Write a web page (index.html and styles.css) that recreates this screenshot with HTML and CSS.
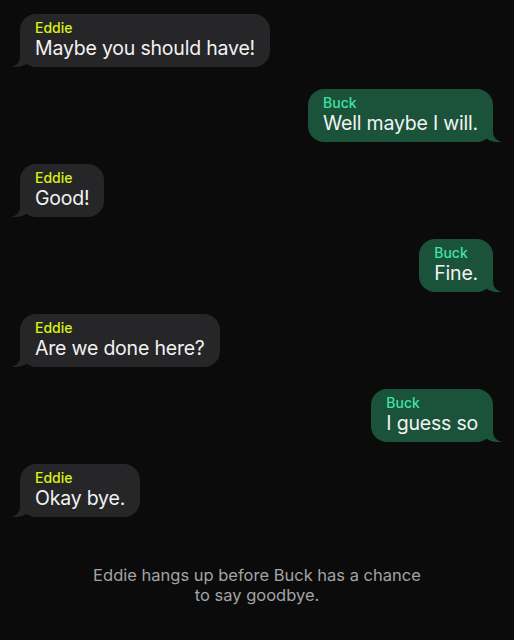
FILE: index.html
```html
<!DOCTYPE html>
<html lang="en">
<head>
  <meta charset="UTF-8">
  <title>Eddie &amp; Buck</title>
  <link rel="stylesheet" href="styles.css">
</head>
<body>
  <div class="thread">
    <div class="msg them">
      <div class="bubble">
        <div class="name">Eddie</div>
        <div class="text">Maybe you should have!</div>
      </div>
    </div>
    <div class="msg me">
      <div class="bubble">
        <div class="name">Buck</div>
        <div class="text">Well maybe I will.</div>
      </div>
    </div>
    <div class="msg them">
      <div class="bubble">
        <div class="name">Eddie</div>
        <div class="text">Good!</div>
      </div>
    </div>
    <div class="msg me">
      <div class="bubble">
        <div class="name">Buck</div>
        <div class="text">Fine.</div>
      </div>
    </div>
    <div class="msg them">
      <div class="bubble">
        <div class="name">Eddie</div>
        <div class="text">Are we done here?</div>
      </div>
    </div>
    <div class="msg me">
      <div class="bubble">
        <div class="name">Buck</div>
        <div class="text">I guess so</div>
      </div>
    </div>
    <div class="msg them">
      <div class="bubble">
        <div class="name">Eddie</div>
        <div class="text">Okay bye.</div>
      </div>
    </div>
  </div>
  <p class="note">Eddie hangs up before Buck has a chance<br>to say goodbye.</p>
</body>
</html>
```

FILE: styles.css
```css
body {
  background-color: #0b0b0b;
  color: #f2f2f2;
  font-family: Inter, "Noto Sans", sans-serif;
  margin: 0;
  padding: 0;
}
.thread {
  display: flex;
  flex-direction: column;
  gap: 22px;
  padding: 14px 21px 0 20px;
}
.msg {
  display: flex;
}
.msg.me {
  justify-content: flex-end;
}
.bubble {
  position: relative;
  padding: 5px 15px 7px 15px;
  border-radius: 16px;
}
.them .bubble {
  background-color: #262628;
}
.me .bubble {
  background-color: #1b523a;
}
.name {
  font-size: 14px;
  font-weight: 500;
  line-height: 17px;
}
.them .name {
  color: #dcf213;
}
.me .name {
  color: #3ee2a2;
}
.text {
  font-size: 19.5px;
  line-height: 24px;
  letter-spacing: -0.2px;
}

/* tails */
.bubble::before,
.bubble::after {
  content: "";
  position: absolute;
  bottom: 0;
  height: 20px;
}
.them .bubble::before {
  left: -8px;
  width: 20px;
  background-color: #262628;
  border-bottom-right-radius: 15px;
}
.them .bubble::after {
  left: -10px;
  width: 10px;
  background-color: #0b0b0b;
  border-bottom-right-radius: 10px;
}
.me .bubble::before {
  right: -8px;
  width: 20px;
  background-color: #1b523a;
  border-bottom-left-radius: 15px;
}
.me .bubble::after {
  right: -10px;
  width: 10px;
  background-color: #0b0b0b;
  border-bottom-left-radius: 10px;
}
.note {
  margin: 48px 0 0;
  text-align: center;
  color: #a3a3a5;
  font-size: 16.5px;
  line-height: 20px;
}
```
